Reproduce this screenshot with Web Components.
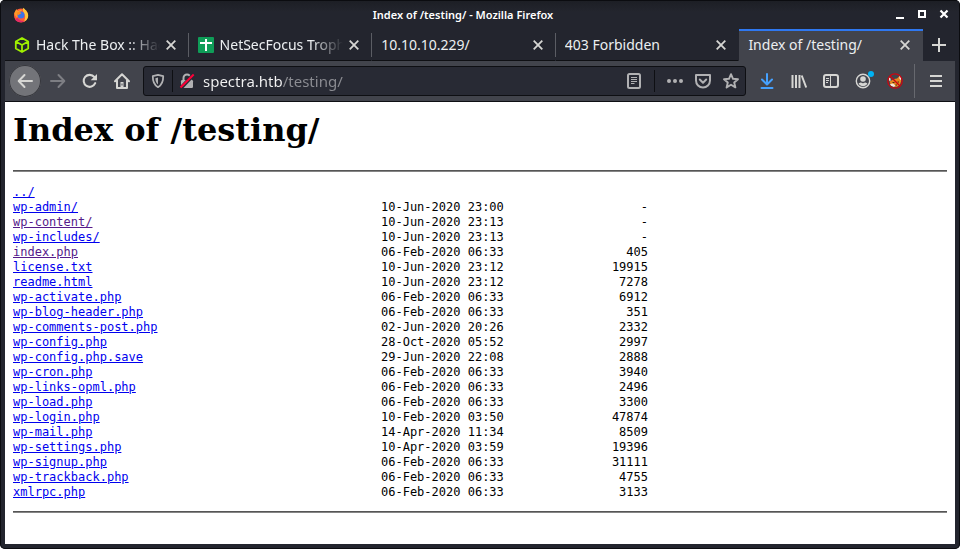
<!DOCTYPE html>
<html lang="en">
<head>
<meta charset="utf-8">
<title>Index of /testing/ - Mozilla Firefox</title>
<style>
html, body { margin: 0; height: 100%; background: #fff; }
body { font-family: "Noto Sans", "Liberation Sans", sans-serif; font-size: 14px; color: #eceff1; }
</style>
</head>
<body>
<browser-window>
  <title-bar slot="title">Index of /testing/ - Mozilla Firefox</title-bar>
  <tab-strip slot="tabs">
    <browser-tab icon="htb">Hack The Box :: Hac</browser-tab>
    <browser-tab icon="sheet">NetSecFocus Troph</browser-tab>
    <browser-tab>10.10.10.229/</browser-tab>
    <browser-tab>403 Forbidden</browser-tab>
    <browser-tab active>Index of /testing/</browser-tab>
  </tab-strip>
  <nav-toolbar slot="toolbar"></nav-toolbar>
  <directory-listing path="/testing/"></directory-listing>
</browser-window>
<script>
const ICONS = {
  firefox: '<circle cx="8" cy="8.500" r="7" fill="#ff5a36"/><path d="M1.200 7C2 4 3 3 3.500 2c.4 1 1 1.600 2 2C7 2.500 8 2.500 9 3L4 11z" fill="#ff9a28"/><path d="M10 .8c1.500 1 5.200 4 5.200 7.700 0 3.500-2.700 6-5.200 6.700 2-2.400 3-5 1.500-8C10.300 5 9.500 3 10 .8z" fill="#ffc53a"/><path d="M2 12.500c2 2.800 7 4 10.500 1 -3 1-6.500.2-8-3z" fill="#e52a67"/><circle cx="8" cy="8" r="3.500" fill="#3b73e8"/><path d="M3.500 5.500c2-1 4-.5 4.800.8L5 8.200z" fill="#ff8b1c"/>',
  htb: '<path d="M8 1l6.200 3.500v7L8 15l-6.200-3.500v-7zM1.800 4.500L8 8l6.200-3.500M8 8v7" fill="none" stroke="#9fef00" stroke-width="1.800" stroke-linejoin="round"/>',
  sheet: '<rect width="16" height="16" rx="1" fill="#0f9d58"/><path d="M7 2h2v3h5v2H9v7H7V7H2V5h5z" fill="#fff"/>',
  min: '<path d="M4 10h8v2H4z" fill="#fff"/>',
  max: '<path d="M5 4h6v6H5z" fill="none" stroke="#fff" stroke-width="2"/>',
  kill: '<path d="M4.500 3.500l7 7m0-7l-7 7" stroke="#fff" stroke-width="2.200"/>',
  close: '<path d="M3.700 3.700l8.600 8.600m0-8.600l-8.600 8.600" stroke="currentColor" stroke-width="1.800"/>',
  plus: '<path d="M8 1v14M1 8h14" stroke="currentColor" stroke-width="2"/>',
  back: '<path d="M15 8H2M7.500 2L1.700 8l5.800 6" fill="none" stroke="currentColor" stroke-width="2" stroke-linecap="round" stroke-linejoin="round"/>',
  forward: '<path d="M1 8h13M8.500 2l5.800 6-5.800 6" fill="none" stroke="currentColor" stroke-width="2" stroke-linecap="round" stroke-linejoin="round"/>',
  reload: '<path d="M13.200 10.200A6 6 0 1 1 12.300 4" fill="none" stroke="currentColor" stroke-width="2.100" stroke-linecap="round"/><path d="M15 1v6.300H8.700z" fill="currentColor"/>',
  home: '<path d="M1 8.200L8 1.300l7 6.900M3 7.500V15h10V7.500" fill="none" stroke="currentColor" stroke-width="2" stroke-linecap="round" stroke-linejoin="round"/><path d="M6.500 9h3v6h-3z" fill="currentColor"/><path d="M8 10.500v2" stroke="#42444c"/>',
  shield: '<path d="M8 1.900L13.200 3.200c.1 5.200-1 8.500-5.200 11-4.200-2.500-5.300-5.800-5.200-11z" fill="none" stroke="currentColor" stroke-width="1.800" stroke-linejoin="round"/><path d="M8 4.500v7C6 9.900 5.400 8 5.400 5.200z" fill="currentColor"/>',
  lock: '<path d="M4.500 7V5a3.500 3.500 0 0 1 7 0v2" fill="none" stroke="currentColor" stroke-width="2"/><rect x="2" y="7" width="12" height="8" rx="1.200" fill="currentColor"/><path d="M1.500 15.500L15 1" stroke="#282a34" stroke-width="4"/><path d="M1.500 14.500L14.700 1.500" stroke="#ff0039" stroke-width="2"/>',
  reader: '<rect x="2" y="1" width="12" height="14" rx="1.500" fill="none" stroke="currentColor" stroke-width="2"/><path d="M5 4.500h6M5 6.500h6M5 8.500h6M5 10.500h3.500" stroke="currentColor"/>',
  dots: '<g fill="currentColor"><circle cx="2" cy="8" r="2"/><circle cx="8" cy="8" r="2"/><circle cx="14" cy="8" r="2"/></g>',
  pocket: '<path d="M1 2h14v5.500a7 7 0 0 1-14 0z" fill="none" stroke="currentColor" stroke-width="2" stroke-linejoin="round"/><path d="M4.800 6.500L8 9.700l3.200-3.200" fill="none" stroke="currentColor" stroke-width="2" stroke-linecap="round" stroke-linejoin="round"/>',
  star: '<path d="M8 1.200l2 4.600 5 .4-3.800 3.300 1.200 4.900L8 11.800l-4.400 2.600 1.200-4.900L1 6.200l5-.4z" fill="none" stroke="currentColor" stroke-width="1.900" stroke-linejoin="round"/>',
  download: '<path d="M8 1v10M3 6.500l5 5 5-5M2.500 15h11" fill="none" stroke="#45a1ff" stroke-width="2" stroke-linecap="round" stroke-linejoin="round"/>',
  library: '<path d="M1.500 2v13M5 2v13M8.500 2v13M10.700 2.500l4.500 12" stroke="currentColor" stroke-width="2"/>',
  sidebar: '<rect x="1" y="2" width="14" height="12" rx="2" fill="none" stroke="currentColor" stroke-width="2"/><path d="M7.500 2v12" stroke="currentColor"/><path d="M3 5.500h3M3 7.500h3M3 9.500h2" stroke="currentColor"/>',
  account: '<circle cx="8" cy="8" r="6.700" fill="none" stroke="currentColor" stroke-width="1.400"/><circle cx="8" cy="6" r="2.800" fill="currentColor"/><path d="M3.600 10.500c1-.8 2-.9 2.500-.9.900.9 2.900.9 3.800 0 .5 0 1.500.1 2.500.9-1.800 3.500-7 3.500-8.800 0z" fill="currentColor"/>',
  proxy: '<path d="M2.500 8.500L7 6l3-.5L12.500 3l1.700 5-1.500 4.500L9 14l-5-1.500z" fill="#e8861e"/><path d="M12.200 2.800l1.600 1 .4 3.700-1.700-1.800zM1.500 4.500l1.800.5.500 2.500-1.500.5zM3 11l3-.5 2.500 2L7 14l-3-1.200z" fill="#f3e7da"/><path d="M5.500 9.500h2M10.500 9h1.500M8.500 12h1.500" stroke="#4a2a14"/><circle cx="8" cy="8" r="7.200" fill="none" stroke="#cc0510" stroke-width="1.300"/><path d="M3 3l10 10" stroke="#cc0510" stroke-width="1.400"/>',
  menu: '<path d="M2 3h12M2 8h12M2 13h12" stroke="currentColor" stroke-width="2"/>'
};
const svg = name => `<svg viewBox="0 0 16 16" aria-hidden="true">${ICONS[name]}</svg>`;

class ShadowElement extends HTMLElement {
  connectedCallback() {
    if (this.shadowRoot) return;
    this.attachShadow({ mode: "open" }).innerHTML = this.render();
  }
}
const define = (name, render) => customElements.define(name, class extends ShadowElement {
  render() { return render(this); }
});

define("icon-glyph", el => `<style>
  :host { display: block; flex: none; width: 16px; height: 16px; }
  svg { display: block; width: 100%; height: 100%; overflow: visible; }
</style>${svg(el.getAttribute("name"))}`);

define("icon-button", el => `<style>
  :host { display: block; flex: none; width: 32px; color: #d6d6d3; }
  button { position: relative; display: grid; place-items: center; width: 100%; height: 32px; margin: 0; padding: 0; border: 0; background: none; color: inherit; }
  :host([small]) { width: 22px; }
  :host([small]) button { height: 22px; }
  :host([field]) { width: 28px; color: #b1b1b3; }
  :host([field]) button { height: 28px; }
  :host([round]) { margin-right: 1px; }
  :host([round]) button { border-radius: 50%; background: #737479; box-shadow: inset 0 0 0 1px #36373d; }
  :host([disabled]) { color: #7d7e83; }
  :host([badge]) button::after { content: ""; position: absolute; top: 6px; right: 5px; width: 6px; height: 6px; border-radius: 50%; background: #00b3f4; }
</style><button type="button" aria-label="${el.getAttribute("label")}" ${el.hasAttribute("disabled") ? "disabled" : ""}><icon-glyph name="${el.getAttribute("icon")}"></icon-glyph></button>`);

define("browser-window", () => `<style>
  :host { display: flex; flex-direction: column; box-sizing: border-box; min-height: 100vh; padding: 0 5px 5px; overflow: hidden;
    background: #23252e; border-radius: 5px; box-shadow: inset 0 0 0 1px #0b0c10; }
  main { flex: 1; background: #fff; }
</style><slot name="title"></slot><slot name="tabs"></slot><slot name="toolbar"></slot><main><slot></slot></main>`);

define("title-bar", () => `<style>
  :host { display: flex; align-items: center; height: 29px; margin: 0 -4px; padding: 0 4px 0 12px; border-radius: 4px 4px 0 0;
    background: linear-gradient(#0b0c10 1px, #1d1f25 1px, #23252e 12px); }
  h1 { flex: 1; margin: 0; padding-left: 8px; text-align: center; font-size: 11px; line-height: 16px; font-weight: 600; color: #fff; }
</style><icon-glyph name="firefox"></icon-glyph><h1><slot></slot></h1>
<icon-button small icon="min" label="Minimize"></icon-button><icon-button small icon="max" label="Maximize"></icon-button><icon-button small icon="kill" label="Close window"></icon-button>`);

define("tab-strip", () => `<style>
  :host { display: flex; height: 32px; }
  div { flex: 1; display: flex; min-width: 0; }
</style><div role="tablist"><slot></slot></div><icon-button icon="plus" label="New tab"></icon-button>`);

define("browser-tab", el => `<style>
  :host { flex: 1; min-width: 0; display: flex; align-items: center; box-sizing: border-box; padding: 0 6px 0 9px;
    border-right: 1px solid transparent; box-shadow: inset 0 -1px #0f1014; }
  :host(:not([active])) { border-image: linear-gradient(transparent 4px, #5b5d64 4px, #5b5d64 28px, transparent 28px) 0 1 0 0; }
  :host([active]) { background: #42444c; border: 0; border-top: 2px solid #2f78f0; padding: 0 7px 2px 9px; box-shadow: none; }
  :host(:nth-last-child(2)) { border-image: none; }
  button { flex: 1; min-width: 0; display: flex; align-items: center; gap: 6px; height: 28px; padding: 0; border: 0; background: none; color: inherit; font: inherit; text-align: left; }
  span { flex: 1; min-width: 0; overflow: hidden; white-space: nowrap; line-height: 20px; }
  .fade { mask-image: linear-gradient(to left, transparent, #000 32px); }
</style><button type="button" role="tab" aria-selected="${el.hasAttribute("active")}">${el.hasAttribute("icon") ? `<icon-glyph name="${el.getAttribute("icon")}"></icon-glyph>` : ""}<span class="${el.hasAttribute("icon") ? "fade" : ""}"><slot></slot></span></button><icon-button small icon="close" label="Close tab"></icon-button>`);

define("url-bar", () => `<style>
  :host { flex: 1; min-width: 0; display: flex; align-items: center; box-sizing: border-box; height: 30px; background: #282a34; border: 1px solid #0e0f13; border-radius: 3px; }
  i { flex: none; width: 1px; height: 22px; background: #0e0f13; }
  .gap { margin: 0 6px; }
  input { flex: 1; min-width: 0; margin: 0 0 0 2px; padding: 0; border: 0; outline: 0; font: inherit; font-size: 15px; line-height: 20px; height: 24px;
    background: linear-gradient(to right, #f4f4f4 80px, #8c8d93 80px) text; -webkit-text-fill-color: transparent; color: #f4f4f4; }
</style>
<icon-button field icon="shield" label="Tracking protection"></icon-button><i></i><icon-button field icon="lock" label="Connection is not secure"></icon-button>
<input type="text" aria-label="Address" value="spectra.htb/testing/" spellcheck="false">
<icon-button field icon="reader" label="Reader view"></icon-button><i class="gap"></i>
<icon-button field icon="dots" label="Page actions"></icon-button><icon-button field icon="pocket" label="Save to Pocket"></icon-button><icon-button field icon="star" label="Bookmark"></icon-button>`);

define("nav-toolbar", () => `<style>
  :host { display: flex; align-items: center; box-sizing: border-box; height: 41px; padding: 0 3px 0 4px; background: #42444c; border-bottom: 1px solid #0e0f13; }
  url-bar { margin: 0 5px; }
  hr { flex: none; width: 1px; height: 34px; margin: 0 5px 0 3px; border: 0; background: #67696f; }
</style>
<icon-button round icon="back" label="Back"></icon-button><icon-button disabled icon="forward" label="Forward"></icon-button><icon-button icon="reload" label="Reload"></icon-button><icon-button icon="home" label="Home"></icon-button>
<url-bar></url-bar>
<icon-button icon="download" label="Downloads"></icon-button><icon-button icon="library" label="Library"></icon-button><icon-button icon="sidebar" label="Sidebars"></icon-button><icon-button badge icon="account" label="Account"></icon-button><icon-button icon="proxy" label="Proxy switcher"></icon-button><hr><icon-button icon="menu" label="Open menu"></icon-button>`);

const FILES = `../
wp-admin/|10-Jun-2020 23:00|-
wp-content/|10-Jun-2020 23:13|-
wp-includes/|10-Jun-2020 23:13|-
index.php|06-Feb-2020 06:33|405
license.txt|10-Jun-2020 23:12|19915
readme.html|10-Jun-2020 23:12|7278
wp-activate.php|06-Feb-2020 06:33|6912
wp-blog-header.php|06-Feb-2020 06:33|351
wp-comments-post.php|02-Jun-2020 20:26|2332
wp-config.php|28-Oct-2020 05:52|2997
wp-config.php.save|29-Jun-2020 22:08|2888
wp-cron.php|06-Feb-2020 06:33|3940
wp-links-opml.php|06-Feb-2020 06:33|2496
wp-load.php|06-Feb-2020 06:33|3300
wp-login.php|10-Feb-2020 03:50|47874
wp-mail.php|14-Apr-2020 11:34|8509
wp-settings.php|10-Apr-2020 03:59|19396
wp-signup.php|06-Feb-2020 06:33|31111
wp-trackback.php|06-Feb-2020 06:33|4755
xmlrpc.php|06-Feb-2020 06:33|3133`.split("\n").map(line => line.split("|"));
const VISITED = new Set(["wp-content/", "index.php"]);

define("directory-listing", el => `<style>
  :host { display: block; padding: 9px 8px 8px; color: #000; }
  h1 { margin: 0 0 21px; font: 700 32px/38px "DejaVu Serif", serif; }
  hr { margin: 0; height: 2px; border: 0; background: linear-gradient(#555 50%, #858585 50%); }
  table { margin: 13px 0 11px; border-collapse: collapse; font: 12px/15px "DejaVu Sans Mono", monospace; white-space: nowrap; }
  td { height: 15px; padding: 0; }
  td:nth-child(1) { width: 368px; }
  td:nth-child(2) { width: 124px; }
  td:nth-child(3) { width: 143px; text-align: right; }
  a { color: #0000ee; text-decoration: underline; }
  a.visited { color: #551a8b; }
</style><h1>Index of ${el.getAttribute("path")}</h1><hr>
<table><tbody>${FILES.map(([name, date = "", size = ""]) => `<tr><td><a href="#${name}" class="${VISITED.has(name) ? "visited" : ""}">${name}</a></td><td>${date}</td><td>${size}</td></tr>`).join("")}</tbody></table><hr>`);
</script>
</body>
</html>
